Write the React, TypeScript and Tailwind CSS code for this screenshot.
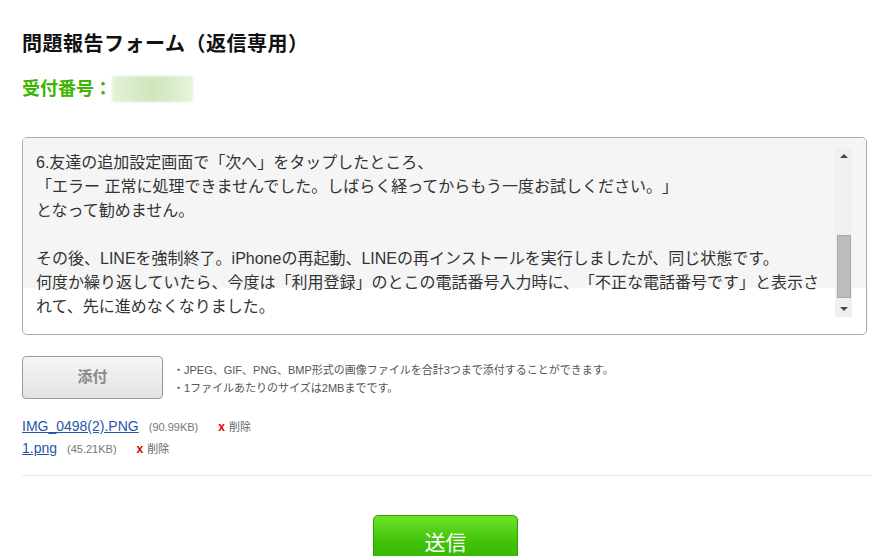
import React from 'react';

const lines = [
  '6.友達の追加設定画面で「次へ」をタップしたところ、',
  '「エラー 正常に処理できませんでした。しばらく経ってからもう一度お試しください。」',
  'となって勧めません。',
  '',
  'その後、LINEを強制終了。iPhoneの再起動、LINEの再インストールを実行しましたが、同じ状態です。',
  '何度か繰り返していたら、今度は「利用登録」のとこの電話番号入力時に、「不正な電話番号です」と表示さ',
  'れて、先に進めなくなりました。',
];

const files = [
  { name: 'IMG_0498(2).PNG', size: '(90.99KB)' },
  { name: '1.png', size: '(45.21KB)' },
];

export default function App() {
  return (
    <div
      className="w-[885px] h-[556px] overflow-hidden bg-white pl-[22px] pr-[13px] pt-[32px] [text-spacing-trim:space-all]"
      style={{ fontFamily: '"Liberation Sans", Arial, "Noto Sans CJK JP", sans-serif' }}
    >
      {/* Title */}
      <h1 className="text-[20px] leading-[24px] font-bold tracking-[0.5px] text-[#111]">問題報告フォーム（返信専用）</h1>

      {/* Receipt number */}
      <div className="mt-[20px] flex items-center h-[26px]">
        <span className="text-[18px] font-bold text-[#3cb400]">受付番号：</span>
        <span className="w-[81px] h-[26px] bg-gradient-to-r from-[#e4f3d8] via-[#cfe5bd] to-[#e6f4dc] blur-[1px]" />
      </div>

      {/* Textarea */}
      <div className="mt-[35px] mr-[5px] relative h-[198px] border border-[#aaa] rounded-[5px] overflow-hidden">
        <div className="absolute inset-x-0 top-0 h-[150px] bg-[#f5f5f5]" />
        <div className="relative pl-[13px] pt-[13px] text-[16px] leading-[24px] text-[#333]">
          {lines.map((l, i) => (
            <div key={i} className="h-[24px] whitespace-nowrap">{l}</div>
          ))}
        </div>
        {/* scrollbar */}
        <div className="absolute right-[14px] top-[10px] w-[17px] h-[169px] bg-[#f0f0f0] flex flex-col items-center">
          <div className="h-[16px] flex items-center justify-center">
            <div className="w-0 h-0 border-l-[4px] border-r-[4px] border-b-[4px] border-l-transparent border-r-transparent border-b-[#4a4050]" />
          </div>
          <div className="mt-[71px] w-[14px] h-[63px] bg-[#bcbcbc] border border-[#a8a8a8]" />
          <div className="mt-auto h-[16px] flex items-center justify-center">
            <div className="w-0 h-0 border-l-[4px] border-r-[4px] border-t-[4px] border-l-transparent border-r-transparent border-t-[#4a4050]" />
          </div>
        </div>
      </div>

      {/* Attach */}
      <div className="mt-[21px] flex items-start">
        <button className="w-[141px] h-[43px] rounded-[4px] border border-[#9a9a9a] bg-gradient-to-b from-[#f6f6f6] to-[#e2e2e2] text-[15px] font-bold text-[#8a8a8a]">
          添付
        </button>
        <div className="ml-[10px] mt-[5px] text-[11px] leading-[18px] text-[#555]">
          <div>・JPEG、GIF、PNG、BMP形式の画像ファイルを合計3つまで添付することができます。</div>
          <div>・1ファイルあたりのサイズは2MBまでです。</div>
        </div>
      </div>

      {/* Files */}
      <div className="mt-[17px] flex flex-col gap-[4px]">
        {files.map((f) => (
          <div key={f.name} className="flex items-baseline h-[18px]">
            <a className="text-[14px] text-[#2a55a8] underline">{f.name}</a>
            <span className="ml-[10px] text-[11px] text-[#777]">{f.size}</span>
            <span className="ml-[20px] text-[12px] font-bold text-[#e00000]">x</span>
            <span className="ml-[4px] text-[11px] text-[#666]">削除</span>
          </div>
        ))}
      </div>

      {/* Divider */}
      <div className="mt-[19px] border-t border-[#ebebeb]" />

      {/* Send */}
      <div className="mt-[39px] flex justify-center pr-[3px]">
        <button className="w-[145px] h-[56px] shrink-0 rounded-[5px] border border-[#2fa000] bg-gradient-to-b from-[#6be224] via-[#3fc10a] to-[#30b000] text-[21px] text-white">
          送信
        </button>
      </div>
    </div>
  );
}
